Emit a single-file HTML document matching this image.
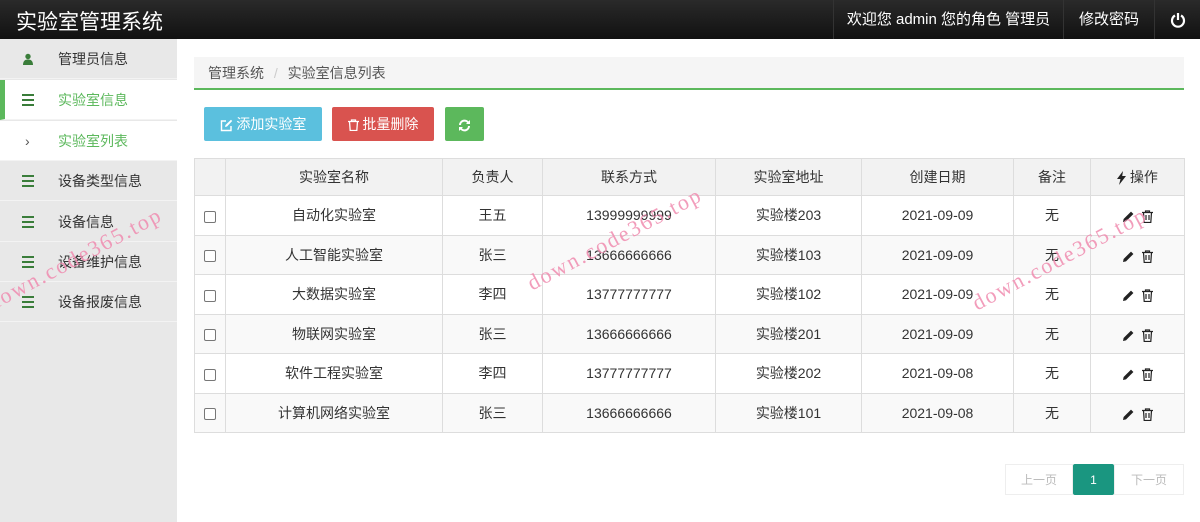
<!DOCTYPE html>
<html><head><meta charset="utf-8"><style>
*{margin:0;padding:0;box-sizing:border-box}
body{width:1200px;height:522px;overflow:hidden;background:#fff;font-family:"Liberation Sans","Noto Sans CJK SC",sans-serif;position:relative;color:#333}
.top{position:absolute;left:0;top:0;width:1200px;height:39px;background:linear-gradient(#2a2a2a,#111);color:#fff}
.top .brand{position:absolute;left:16px;top:6px;font-size:21px}
.top .r{position:absolute;top:0;height:39px;line-height:39px;font-size:15px;border-left:1px solid #333;text-align:center}
.side{position:absolute;left:0;top:39px;width:177px;height:483px;background:#e8e8e8}
.it{position:absolute;left:0;width:177px;height:40px;line-height:40px;font-size:14px;border-bottom:1px solid #f3f3f3}
.it .ic{position:absolute;left:22px;top:14px;width:12px;height:12px}
.bars{border-top:2px solid #3a7d3a;border-bottom:2px solid #3a7d3a}
.bars:after{content:"";position:absolute;left:0;top:3px;width:12px;height:2px;background:#3a7d3a}
.it .t{position:absolute;left:58px}
.bc{position:absolute;left:194px;top:57px;width:990px;height:33px;background:#f5f5f5;border-bottom:2px solid #5cb85c;font-size:14px;line-height:33px;padding-left:14px;color:#555}
.btn{position:absolute;top:107px;height:34px;line-height:34px;color:#fff;font-size:14px;text-align:center;border-radius:2px}
table{position:absolute;left:194px;top:158px;border-collapse:collapse;font-size:14px}
td,th{border:1px solid #ddd;text-align:center;height:39.5px;font-weight:normal}
tr:nth-child(odd) td{background:#f9f9f9}
th{background:#f2f2f2;height:37px}
.cb{display:inline-block;width:12px;height:12px;border:1px solid #777;border-radius:2px;background:#fff;vertical-align:middle}
.wm{position:absolute;color:#f08cb0;font-family:"Liberation Serif",serif;font-size:22px;letter-spacing:2px;transform:rotate(-28deg);transform-origin:left bottom;white-space:nowrap;opacity:.85}
.pg{position:absolute;top:464px;height:31px;line-height:31px;font-size:12px;text-align:center;border:1px solid #eee;color:#bbb}
svg{vertical-align:middle}
</style></head><body>
<div class="top"><div class="brand">实验室管理系统</div>
<div class="r" style="left:833px;width:230px">欢迎您 admin 您的角色 管理员</div>
<div class="r" style="left:1063px;width:91px">修改密码</div>
<div class="r" style="left:1154px;width:46px"><svg width="16" height="16" viewBox="0 0 16 16"><path d="M5 3.5A6 6 0 1 0 11 3.5" fill="none" stroke="#fff" stroke-width="2.2"/><path d="M8 1v7" stroke="#fff" stroke-width="2.2"/></svg></div></div>
<div class="side">
<div class="it" style="top:0"><svg class="ic" viewBox="0 0 12 12" style="position:absolute;left:22px;top:14px;width:12px;height:12px"><circle cx="6" cy="3.5" r="2.7" fill="#3a7d3a"/><path d="M1 12c0-4 2-5.5 5-5.5s5 1.5 5 5.5z" fill="#3a7d3a"/></svg><span class="t">管理员信息</span></div>
<div class="it" style="top:41px;background:#fff;border-left:5px solid #5cb85c;color:#5cb85c"><span class="ic bars" style="left:17px"></span><span class="t" style="left:53px">实验室信息</span></div>
<div class="it" style="top:82px;background:#fff;color:#5cb85c"><span style="position:absolute;color:#555;left:25px">›</span><span class="t">实验室列表</span></div>
<div class="it" style="top:122px"><span class="ic bars"></span><span class="t">设备类型信息</span></div>
<div class="it" style="top:163px"><span class="ic bars"></span><span class="t">设备信息</span></div>
<div class="it" style="top:203px"><span class="ic bars"></span><span class="t">设备维护信息</span></div>
<div class="it" style="top:243px"><span class="ic bars"></span><span class="t">设备报废信息</span></div>
</div>
<div class="bc">管理系统 <span style="color:#ccc;margin:0 6px">/</span> 实验室信息列表</div>
<div class="btn" style="left:204px;width:118px;background:#5bc0de"><svg width="13" height="13" viewBox="0 0 13 13"><path d="M6 2H1.5v9.5H11V7" fill="none" stroke="#fff" stroke-width="1.4"/><path d="M5 8l.5-2L11 .8l1.2 1.2L7 7.5z" fill="#fff"/></svg> 添加实验室</div>
<div class="btn" style="left:332px;width:102px;background:#d9534f"><svg width="11" height="12" viewBox="0 0 11 12"><path d="M0 2.5h11M3.5 2.5V1h4v1.5M1.5 2.5l.7 9h6.6l.7-9" fill="none" stroke="#fff" stroke-width="1.3"/></svg> 批量删除</div>
<div class="btn" style="left:445px;width:39px;background:#5cb85c"><svg width="13" height="13" viewBox="0 0 13 13"><path d="M2 6a4.5 4.5 0 0 1 8.3-2.3M11 7a4.5 4.5 0 0 1-8.3 2.3" fill="none" stroke="#fff" stroke-width="2"/><path d="M12 1v4H8zM1 12V8h4z" fill="#fff"/></svg></div>
<table>
<tr><th style="width:31px"></th><th style="width:217px">实验室名称</th><th style="width:100px">负责人</th><th style="width:173px">联系方式</th><th style="width:146px">实验室地址</th><th style="width:152px">创建日期</th><th style="width:77px">备注</th><th style="width:94px"><svg width="9" height="14" viewBox="0 0 9 14"><path d="M6 0L0 8h3.5L2 14l7-9H5.2z" fill="#222"/></svg> 操作</th></tr>
<tr><td><span class="cb"></span></td><td>自动化实验室</td><td>王五</td><td>13999999999</td><td>实验楼203</td><td>2021-09-09</td><td>无</td><td class="op"></td></tr>
<tr><td><span class="cb"></span></td><td>人工智能实验室</td><td>张三</td><td>13666666666</td><td>实验楼103</td><td>2021-09-09</td><td>无</td><td class="op"></td></tr>
<tr><td><span class="cb"></span></td><td>大数据实验室</td><td>李四</td><td>13777777777</td><td>实验楼102</td><td>2021-09-09</td><td>无</td><td class="op"></td></tr>
<tr><td><span class="cb"></span></td><td>物联网实验室</td><td>张三</td><td>13666666666</td><td>实验楼201</td><td>2021-09-09</td><td>无</td><td class="op"></td></tr>
<tr><td><span class="cb"></span></td><td>软件工程实验室</td><td>李四</td><td>13777777777</td><td>实验楼202</td><td>2021-09-08</td><td>无</td><td class="op"></td></tr>
<tr><td><span class="cb"></span></td><td>计算机网络实验室</td><td>张三</td><td>13666666666</td><td>实验楼101</td><td>2021-09-08</td><td>无</td><td class="op"></td></tr>
</table>
<div class="pg" style="left:1005px;width:68px">上一页</div>
<div class="pg" style="left:1073px;width:41px;background:#1a9680;color:#fff;border-color:#1a9680;border-radius:2px">1</div>
<div class="pg" style="left:1114px;width:70px">下一页</div>
<div class="wm" style="left:-5px;top:290px">down.code365.top</div>
<div class="wm" style="left:535px;top:270px">down.code365.top</div>
<div class="wm" style="left:980px;top:290px">down.code365.top</div>
<script>
var ic='<svg width="13" height="13" viewBox="0 0 13 13"><path d="M1 12l.6-3L9 1.6 11.4 4 4 11.4z" fill="#222"/></svg>&nbsp;&nbsp;<svg width="11" height="13" viewBox="0 0 11 13"><path d="M0 2.5h11M3.5 2.5V1h4v1.5M1.5 2.5l.7 10h6.6l.7-10M4 5v5M7 5v5" fill="none" stroke="#222" stroke-width="1.2"/></svg>';
document.querySelectorAll('.op').forEach(function(e){e.innerHTML=ic});
</script>
</body></html>
